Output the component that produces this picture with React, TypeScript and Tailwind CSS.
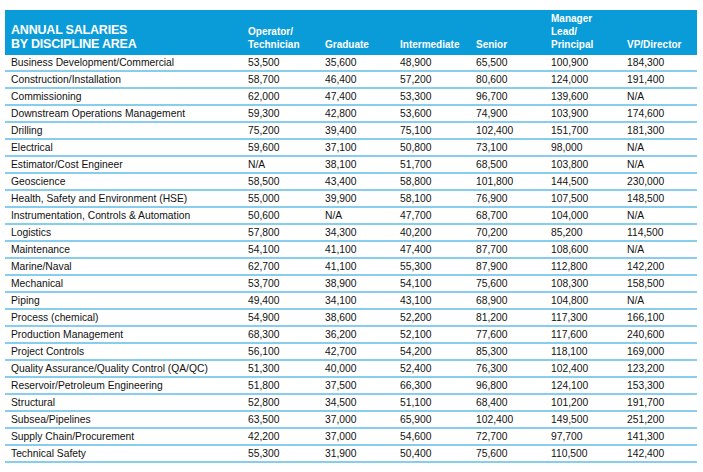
import React from "react";

const rows: string[][] = [
  ["Business Development/Commercial", "53,500", "35,600", "48,900", "65,500", "100,900", "184,300"],
  ["Construction/Installation", "58,700", "46,400", "57,200", "80,600", "124,000", "191,400"],
  ["Commissioning", "62,000", "47,400", "53,300", "96,700", "139,600", "N/A"],
  ["Downstream Operations Management", "59,300", "42,800", "53,600", "74,900", "103,900", "174,600"],
  ["Drilling", "75,200", "39,400", "75,100", "102,400", "151,700", "181,300"],
  ["Electrical", "59,600", "37,100", "50,800", "73,100", "98,000", "N/A"],
  ["Estimator/Cost Engineer", "N/A", "38,100", "51,700", "68,500", "103,800", "N/A"],
  ["Geoscience", "58,500", "43,400", "58,800", "101,800", "144,500", "230,000"],
  ["Health, Safety and Environment (HSE)", "55,000", "39,900", "58,100", "76,900", "107,500", "148,500"],
  ["Instrumentation, Controls & Automation", "50,600", "N/A", "47,700", "68,700", "104,000", "N/A"],
  ["Logistics", "57,800", "34,300", "40,200", "70,200", "85,200", "114,500"],
  ["Maintenance", "54,100", "41,100", "47,400", "87,700", "108,600", "N/A"],
  ["Marine/Naval", "62,700", "41,100", "55,300", "87,900", "112,800", "142,200"],
  ["Mechanical", "53,700", "38,900", "54,100", "75,600", "108,300", "158,500"],
  ["Piping", "49,400", "34,100", "43,100", "68,900", "104,800", "N/A"],
  ["Process (chemical)", "54,900", "38,600", "52,200", "81,200", "117,300", "166,100"],
  ["Production Management", "68,300", "36,200", "52,100", "77,600", "117,600", "240,600"],
  ["Project Controls", "56,100", "42,700", "54,200", "85,300", "118,100", "169,000"],
  ["Quality Assurance/Quality Control (QA/QC)", "51,300", "40,000", "52,400", "76,300", "102,400", "123,200"],
  ["Reservoir/Petroleum Engineering", "51,800", "37,500", "66,300", "96,800", "124,100", "153,300"],
  ["Structural", "52,800", "34,500", "51,100", "68,400", "101,200", "191,700"],
  ["Subsea/Pipelines", "63,500", "37,000", "65,900", "102,400", "149,500", "251,200"],
  ["Supply Chain/Procurement", "42,200", "37,000", "54,600", "72,700", "97,700", "141,300"],
  ["Technical Safety", "55,300", "31,900", "50,400", "75,600", "110,500", "142,400"],
];

const widths = ["w-[243px] pl-[6px]", "w-[77px]", "w-[75px]", "w-[76px]", "w-[75px]", "w-[76px]", "flex-1"];

export default function App() {
  return (
    <div
      className="w-[703px] h-[472px] bg-white pt-[10px] px-[5px]"
      style={{ fontFamily: '"Liberation Sans", Arial, sans-serif' }}
    >
      <div className="w-[692px]">
        <div className="flex items-end bg-[#0a9bd9] text-white font-bold h-[45px] pb-[4px]">
          <div className="w-[243px] pl-[6px] text-[12.5px] leading-[14px] tracking-[-0.2px]">
            ANNUAL SALARIES
            <br />
            BY DISCIPLINE AREA
          </div>
          <div className="w-[77px] text-[10px] leading-[13px]">
            Operator/
            <br />
            Technician
          </div>
          <div className="w-[75px] text-[10px] leading-[13px]">Graduate</div>
          <div className="w-[76px] text-[10px] leading-[13px]">Intermediate</div>
          <div className="w-[75px] text-[10px] leading-[13px]">Senior</div>
          <div className="w-[76px] text-[10px] leading-[13px]">
            Manager
            <br />
            Lead/
            <br />
            Principal
          </div>
          <div className="flex-1 text-[10px] leading-[13px]">VP/Director</div>
        </div>
        {rows.map((r, i) => (
          <div key={i} className="flex items-center h-[17px] pt-[1px] border-b-2 border-[#86cdee] text-[10.3px] text-[#111111]">
            {r.map((c, j) => (
              <div key={j} className={widths[j] + " whitespace-nowrap"}>
                {c}
              </div>
            ))}
          </div>
        ))}
      </div>
    </div>
  );
}
